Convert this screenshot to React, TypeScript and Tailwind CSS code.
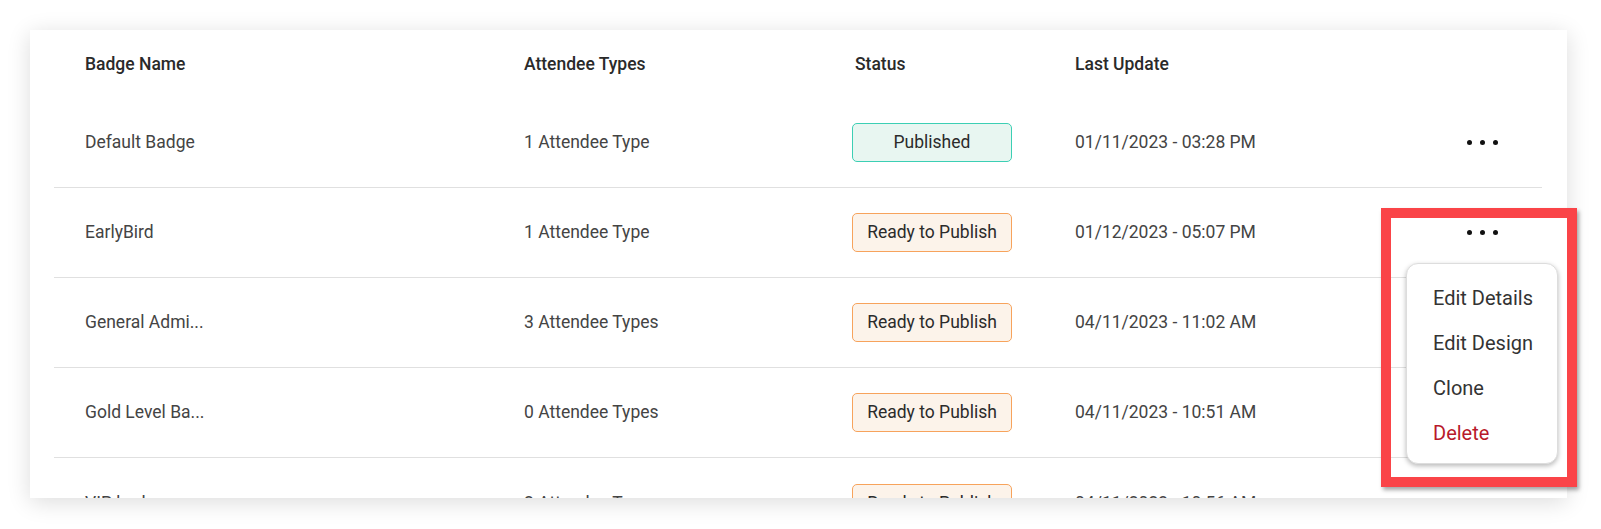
import React from 'react';

type Row = { name: string; types: string; status: 'Published' | 'Ready to Publish'; updated: string };

const rows: Row[] = [
  { name: 'Default Badge', types: '1 Attendee Type', status: 'Published', updated: '01/11/2023 - 03:28 PM' },
  { name: 'EarlyBird', types: '1 Attendee Type', status: 'Ready to Publish', updated: '01/12/2023 - 05:07 PM' },
  { name: 'General Admi...', types: '3 Attendee Types', status: 'Ready to Publish', updated: '04/11/2023 - 11:02 AM' },
  { name: 'Gold Level Ba...', types: '0 Attendee Types', status: 'Ready to Publish', updated: '04/11/2023 - 10:51 AM' },
  { name: 'VIP badge', types: '2 Attendee Types', status: 'Ready to Publish', updated: '04/11/2023 - 10:56 AM' },
];

const cols = 'grid grid-cols-[439px_328px_223px_1fr_110px] items-center pl-[31px]';

const StatusPill: React.FC<{ status: Row['status'] }> = ({ status }) => (
  <span
    className={
      status === 'Published'
        ? 'flex h-[39px] w-[160px] items-center justify-center rounded-[5px] border border-[#3ccfb4] bg-[#e8f6f1] text-[17.5px] text-[#2b2b2b]'
        : 'flex h-[39px] w-[160px] items-center justify-center rounded-[5px] border border-[#f7a35c] bg-[#fcf3ea] text-[17.5px] text-[#2b2b2b]'
    }
  >
    {status}
  </span>
);

const Dots = () => (
  <div className="flex items-center gap-[8px] pl-[35px]">
    <span className="h-[5px] w-[5px] rounded-full bg-[#111]" />
    <span className="h-[5px] w-[5px] rounded-full bg-[#111]" />
    <span className="h-[5px] w-[5px] rounded-full bg-[#111]" />
  </div>
);

export default function App() {
  return (
    <div className="relative h-[529px] w-[1601px] overflow-hidden bg-white pl-[30px] pt-[30px] font-['Roboto',sans-serif]">
      <div className="h-[468px] w-[1537px] overflow-hidden bg-white pl-[24px] pr-[25px] shadow-[0_4px_22px_rgba(0,0,0,0.14)]">
        <div className={`${cols} h-[68px] text-[17.5px] font-medium text-[#2a2a2a]`}>
          <span>Badge Name</span>
          <span>Attendee Types</span>
          <span className="pl-[3px]">Status</span>
          <span>Last Update</span>
          <span />
        </div>
        {rows.map((row, i) => (
          <div
            key={row.name}
            className={`${cols} h-[90px] text-[17.5px] text-[#444] ${i < rows.length - 1 ? 'border-b border-[#e0e0e0]' : ''}`}
          >
            <span>{row.name}</span>
            <span>{row.types}</span>
            <StatusPill status={row.status} />
            <span>{row.updated}</span>
            {i < 2 ? <Dots /> : <span />}
          </div>
        ))}
      </div>

      {/* open row menu */}
      <div className="absolute left-[1406px] top-[263px] flex h-[201px] w-[152px] flex-col justify-center rounded-[12px] border border-[#ddd] bg-white pl-[26px] pt-[3px] text-[20px] shadow-[0_2px_5px_rgba(0,0,0,0.28)]">
        <div className="flex h-[45px] items-center text-[#333]">Edit Details</div>
        <div className="flex h-[45px] items-center text-[#333]">Edit Design</div>
        <div className="flex h-[45px] items-center text-[#333]">Clone</div>
        <div className="flex h-[45px] items-center text-[#b8192b]">Delete</div>
      </div>

      {/* highlight annotation */}
      <div className="pointer-events-none absolute left-[1381px] top-[208px] h-[279px] w-[196px] border-[10px] border-[#fa4448] shadow-[2px_3px_4px_rgba(0,0,0,0.35)]" />
    </div>
  );
}
